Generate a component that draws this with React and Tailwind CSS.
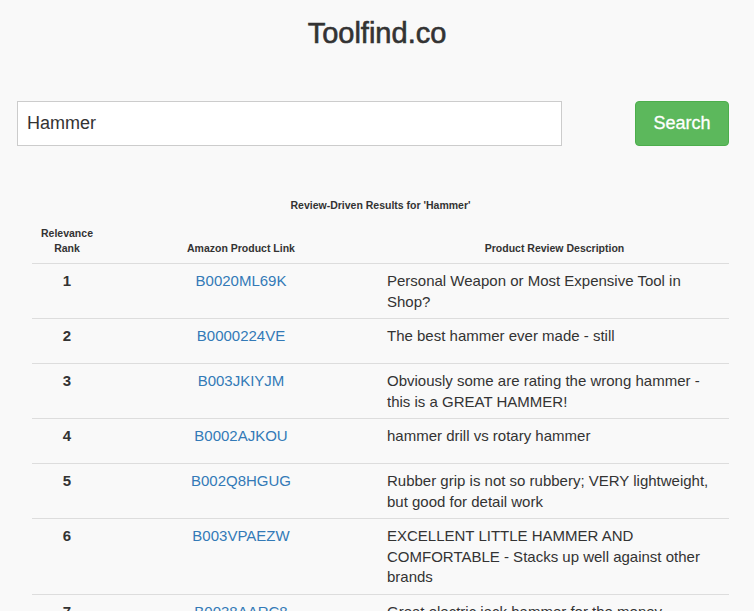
const rows = [
  { rank: 1, asin: 'B0020ML69K', text: 'Personal Weapon or Most Expensive Tool in Shop?' },
  { rank: 2, asin: 'B0000224VE', text: 'The best hammer ever made - still' },
  { rank: 3, asin: 'B003JKIYJM', text: 'Obviously some are rating the wrong hammer - this is a GREAT HAMMER!' },
  { rank: 4, asin: 'B0002AJKOU', text: 'hammer drill vs rotary hammer' },
  { rank: 5, asin: 'B002Q8HGUG', text: 'Rubber grip is not so rubbery; VERY lightweight, but good for detail work' },
  { rank: 6, asin: 'B003VPAEZW', text: 'EXCELLENT LITTLE HAMMER AND COMFORTABLE - Stacks up well against other brands' },
  { rank: 7, asin: 'B0038AARC8', text: 'Great electric jack hammer for the money' },
];

export default function App() {
  return (
    <div className="min-h-screen bg-[#f9f9f9] text-[#333] font-['Liberation_Sans',Arial,sans-serif]">
      {/* Header */}
      <h1 className="pt-[17px] text-center text-[29px] leading-[32px] font-normal [-webkit-text-stroke:0.6px_#333]">
        Toolfind.co
      </h1>

      {/* Search bar */}
      <div className="mt-[52px] flex items-center pl-[17px] pr-[25px]">
        <input
          defaultValue="Hammer"
          className="h-[45px] w-[545px] border border-[#ccc] bg-white pl-[9px] text-[18px] text-[#333] outline-none"
        />
        <button className="ml-auto h-[45px] w-[94px] rounded-[4px] border border-[#4cae4c] bg-[#5cb85c] text-[18px] text-white [-webkit-text-stroke:0.3px_#fff]">
          Search
        </button>
      </div>

      {/* Results */}
      <div className="mt-[52px] ml-[32px] mr-[25px]">
        <div className="text-center text-[10.5px] leading-[15px] font-bold">
          Review-Driven Results for 'Hammer'
        </div>

        <div className="mt-[13px] grid grid-cols-[70px_278px_1fr] items-end pb-[7px] text-center text-[10.5px] leading-[15px] font-bold">
          <div>Relevance<br />Rank</div>
          <div>Amazon Product Link</div>
          <div>Product Review Description</div>
        </div>

        {rows.map(r => (
          <div
            key={r.rank}
            className="grid min-h-[45px] grid-cols-[70px_278px_1fr] border-t border-[#ddd] text-[15px] leading-[20.5px]"
          >
            <div className="pt-[7px] pb-[6px] text-center font-bold">{r.rank}</div>
            <div className="pt-[7px] pb-[6px] text-center">
              <a href="#" className="text-[#337ab7]">{r.asin}</a>
            </div>
            <div className="pt-[7px] pb-[6px] pl-[7px] pr-[8px]">{r.text}</div>
          </div>
        ))}
      </div>
    </div>
  );
}
